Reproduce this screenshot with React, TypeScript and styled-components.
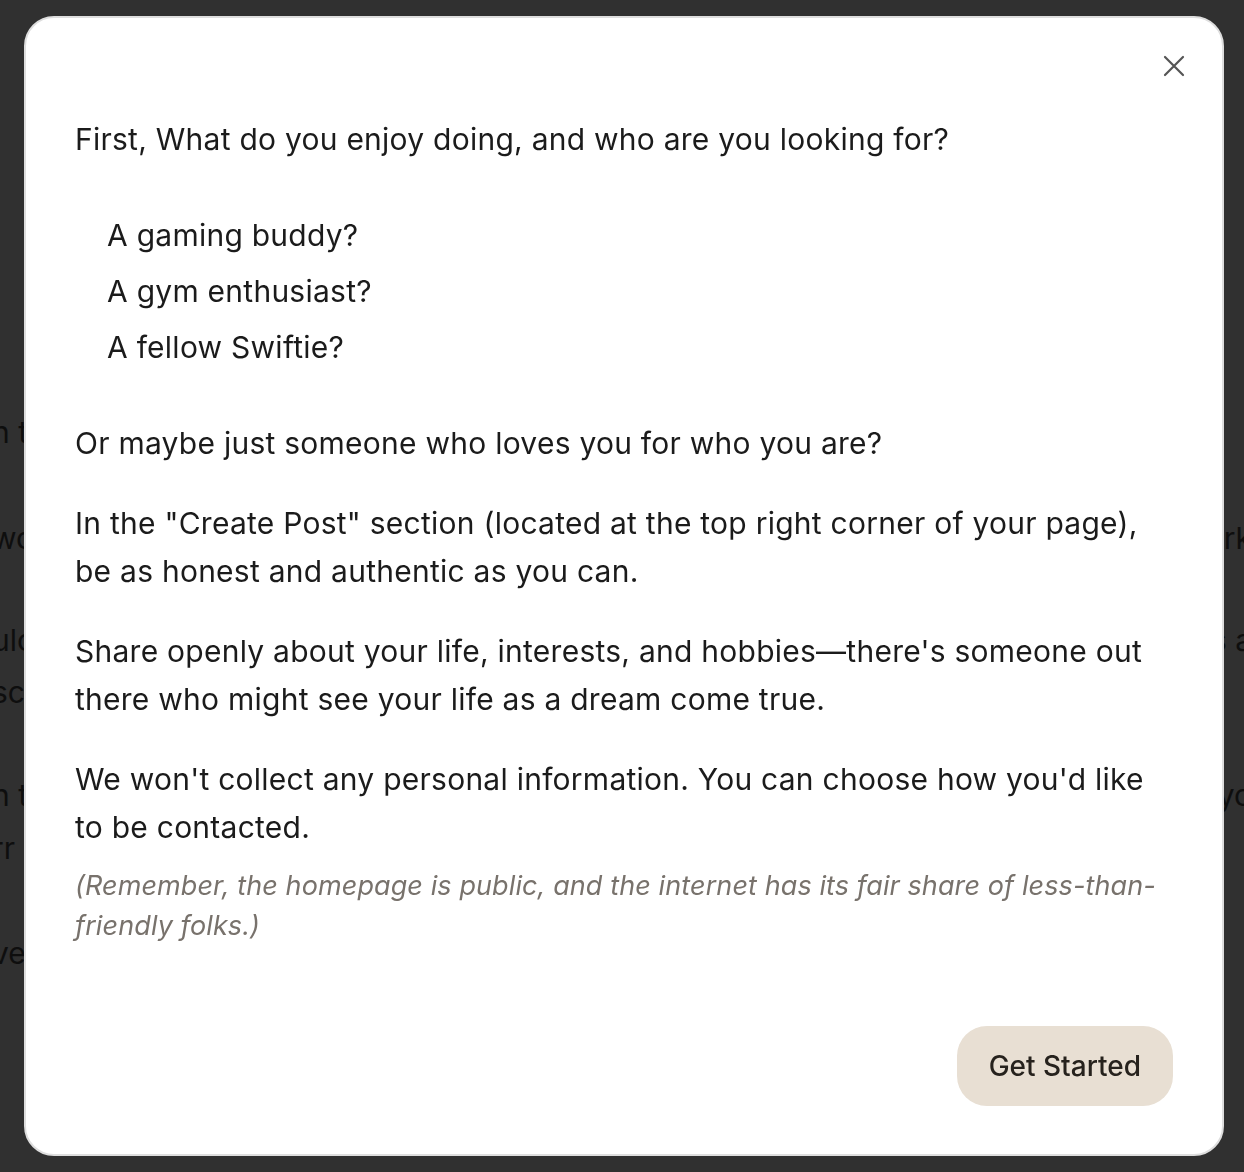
import styled, { createGlobalStyle } from 'styled-components';

const GlobalStyle = createGlobalStyle`
  * { box-sizing: border-box; }
  html, body {
    margin: 0;
    padding: 0;
    background: #303030;
    font-family: Inter, "Noto Sans", "Liberation Sans", sans-serif;
  }
`;

type BackLine = { left: string; right: string; top: number };

const backLines: BackLine[] = [
  { left: 'n t', right: '', top: 412 },
  { left: 'wo', right: 'rk', top: 518 },
  { left: 'ulc', right: 's a', top: 620 },
  { left: 'sc', right: '', top: 672 },
  { left: 'n t', right: 'yo', top: 775 },
  { left: 'rr', right: '', top: 828 },
  { left: 've', right: '', top: 933 },
];

const BackPage = styled.div`
  position: relative;
  width: 1244px;
  height: 1172px;
  overflow: hidden;
  background: #303030;
`;

const BackRow = styled.div`
  position: absolute;
  left: -8px;
  right: -8px;
  display: flex;
  justify-content: space-between;
  font-size: 30px;
  line-height: 40px;
  color: #0e0e0e;
  white-space: nowrap;
`;

const Overlay = styled.div`
  position: fixed;
  inset: 0;
  display: flex;
  align-items: flex-start;
  justify-content: flex-start;
  padding: 16px 0 0 24px;
`;

const Modal = styled.div`
  width: 1200px;
  height: 1140px;
  background: #ffffff;
  border-radius: 30px;
  border: 2px solid #dedede;
  display: flex;
  flex-direction: column;
  color: #1b1b1b;
`;

const Header = styled.div`
  display: flex;
  justify-content: flex-end;
  padding: 30px 30px 0;
`;

const CloseButton = styled.button`
  width: 36px;
  height: 36px;
  border: none;
  background: transparent;
  padding: 0;
  display: flex;
  align-items: center;
  justify-content: center;
  cursor: pointer;
`;

const Body = styled.div`
  padding: 31px 48px 0 49px;
  font-size: 30px;
  line-height: 48px;
  letter-spacing: 0.25px;
`;

const Para = styled.p<{ $gap?: number }>`
  margin: ${({ $gap }) => $gap ?? 32}px 0 0;
`;

const Options = styled.ul`
  list-style: none;
  margin: 44px 0 0;
  padding: 0 0 0 32px;

  li {
    line-height: 56px;
  }
`;

const Note = styled.p`
  margin: 15px 0 0;
  font-size: 27px;
  line-height: 40px;
  letter-spacing: 0.1px;
  font-style: italic;
  color: #78726c;
`;

const Footer = styled.div`
  margin-top: auto;
  display: flex;
  justify-content: flex-end;
  padding: 0 49px 48px;
`;

const PrimaryButton = styled.button`
  height: 80px;
  padding: 0 32px;
  border: none;
  border-radius: 30px;
  background: #e8dfd3;
  color: #26221d;
  font-family: inherit;
  font-size: 28px;
  font-weight: 500;
  cursor: pointer;
`;

const options = ['A gaming buddy?', 'A gym enthusiast?', 'A fellow Swiftie?'];

export default function App() {
  return (
    <>
      <GlobalStyle />
      <BackPage>
        {backLines.map((l, i) => (
          <BackRow key={i} style={{ top: l.top }}>
            <span>{l.left}</span>
            <span>{l.right}</span>
          </BackRow>
        ))}
      </BackPage>
      <Overlay>
        <Modal role="dialog">
          <Header>
            <CloseButton aria-label="Close">
              <svg width="22" height="22" viewBox="0 0 22 22" fill="none">
                <path d="M2 2L20 20M20 2L2 20" stroke="#555" strokeWidth="2.2" strokeLinecap="round" />
              </svg>
            </CloseButton>
          </Header>
          <Body>
            <Para $gap={0}>First, What do you enjoy doing, and who are you looking for?</Para>
            <Options>
              {options.map((o) => (
                <li key={o}>{o}</li>
              ))}
            </Options>
            <Para $gap={44}>Or maybe just someone who loves you for who you are?</Para>
            <Para>
              In the "Create Post" section (located at the top right corner of your page), be as honest
              and authentic as you can.
            </Para>
            <Para>
              Share openly about your life, interests, and hobbies—there's someone out there who might
              see your life as a dream come true.
            </Para>
            <Para>
              We won't collect any personal information. You can choose how you'd like to be contacted.
            </Para>
            <Note>
              (Remember, the homepage is public, and the internet has its fair share of less-than-friendly
              folks.)
            </Note>
          </Body>
          <Footer>
            <PrimaryButton>Get Started</PrimaryButton>
          </Footer>
        </Modal>
      </Overlay>
    </>
  );
}
